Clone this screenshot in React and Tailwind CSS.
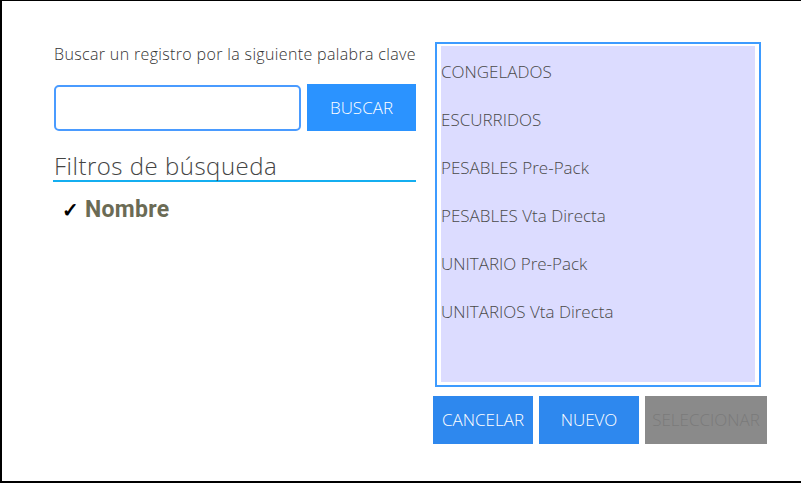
import React from "react";

const items = [
  "CONGELADOS",
  "ESCURRIDOS",
  "PESABLES Pre-Pack",
  "PESABLES Vta Directa",
  "UNITARIO Pre-Pack",
  "UNITARIOS Vta Directa",
];

const App = () => {
  return (
    <div
      className="w-[801px] h-[483px] bg-white border-l-2 border-t border-b-2 border-black flex"
      style={{ fontFamily: "'Open Sans', 'Noto Sans', sans-serif" }}
    >
      {/* left side: search */}
      <div className="w-[363px] ml-[51px] pt-[43px] flex flex-col">
        <p className="text-[16px] leading-[21px] font-light text-[#333] pl-[1px] tracking-[0.35px] whitespace-nowrap">
          Buscar un registro por la siguiente palabra clave
        </p>
        <div className="flex mt-[19px] h-[47px] items-start">
          <input
            type="text"
            className="w-[247px] h-[46px] mt-[1px] ml-[1px] border-2 border-[#4a9bff] rounded-[5px] outline-none px-2"
          />
          <button className="ml-[6px] w-[109px] h-[47px] bg-[#2b93ff] text-white text-[17px] font-light">
            BUSCAR
          </button>
        </div>
        <div className="mt-[20px] border-b-2 border-[#14aef0] h-[31px]">
          <span className="text-[24px] leading-[30px] font-light text-[#444] tracking-[0.5px] pl-[1px]">
            Filtros de búsqueda
          </span>
        </div>
        <div className="flex items-center mt-[11px] pl-[9px]">
          <span className="text-[20px] text-black font-bold">✓</span>
          <span
            className="ml-[6px] text-[23px] font-bold text-[#6b6b55] tracking-[0.3px]"
            style={{ fontFamily: "Roboto, sans-serif" }}
          >
            Nombre
          </span>
        </div>
      </div>

      {/* right side: list + actions */}
      <div className="ml-[17px] pt-[41px] flex flex-col">
        <div className="ml-[2px] w-[326px] h-[345px] border-2 border-[#3d9bff] px-[4px] pt-[2px] pb-[3px]">
          <div className="w-full h-full bg-[#dcdcff] pt-[14px]">
            {items.map((item) => (
              <div
                key={item}
                className="h-[48px] text-[17px] leading-[24px] font-light text-[#4a4a4a]"
              >
                {item}
              </div>
            ))}
          </div>
        </div>
        <div className="flex gap-[6px] mt-[9px]">
          <button className="w-[100px] h-[48px] bg-[#2e88ee] text-white text-[17px] font-light">
            CANCELAR
          </button>
          <button className="w-[100px] h-[48px] bg-[#2e88ee] text-white text-[17px] font-light">
            NUEVO
          </button>
          <button className="w-[122px] h-[48px] bg-[#8a8a8a] text-[#7a7a7a] text-[17px] font-light">
            SELECCIONAR
          </button>
        </div>
      </div>
    </div>
  );
};

export default App;
